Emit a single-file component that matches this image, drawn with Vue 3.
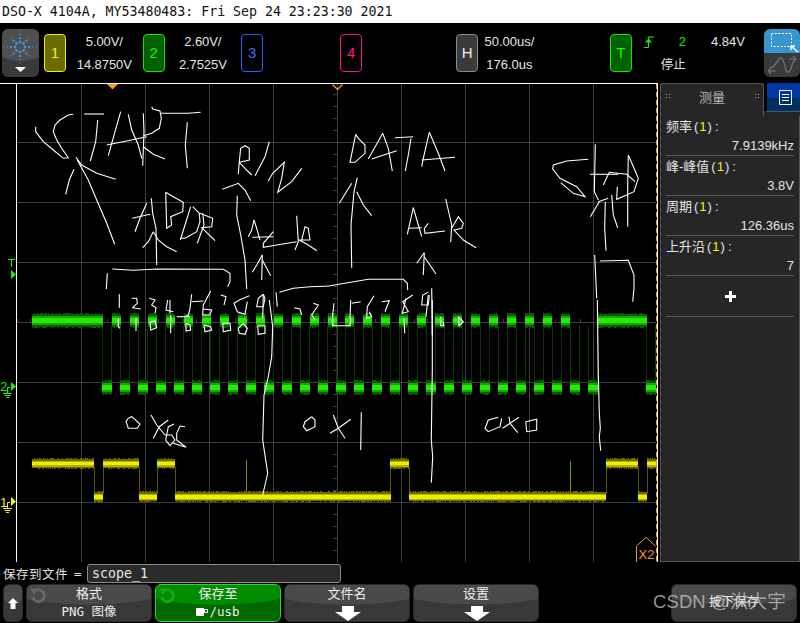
<script setup>
const maps = [
  [0, 85, [
    '220,88 205,90 180,105 165,120 160,140 170,165 185,190 205,218 190,220 160,195 130,170 107,140 107,125',
    '253,87 312,87', '293,105 287,170 271,228', '362,80 345,140 325,212', '320,180 380,168 440,155',
    '385,88 395,135 415,180 425,220', '430,85 432,140 428,242',
    '455,65 458,72 480,78 484,100 478,130 455,145 430,152', '430,185 460,208 495,222',
    '483,85 565,85 602,82', '562,112 556,180 562,250', '222,253 208,285 197,328',
    '228,217 245,240 290,265 347,283', '232,225 265,285 290,345 320,415 344,478',
    '715,268 718,230 722,190 735,182 748,190 748,225 718,232 735,250 755,270', '808,170 795,215 765,272',
    '805,288 818,265 853,232 845,280 833,322 875,290 905,250', '667,313 715,295 735,315 752,347',
    '712,332 710,390 722,450 735,525 740,612', '440,355 420,400 405,440', '397,400 450,388',
    '454,340 458,385 468,430 470,540', '497,322 500,430 515,420 512,395 548,380 550,352 520,335 497,322',
    '572,365 555,420 541,465', '541,460 555,460 590,440 600,410 598,385 578,365', '608,385 612,420 592,475',
    '600,385 638,400 635,425 605,428 645,467', '460,440 445,470 428,488', '460,440 475,465 500,485 530,500',
    '762,405 755,435 745,455', '762,405 770,430 780,465', '757,457 820,455', '820,440 790,475 790,487 830,480 890,470',
    '890,392 895,470 885,495', '905,465 915,425 925,430 930,465 898,465 925,480 950,497',
    '787,510 770,540 757,562', '787,510 785,585', '787,525 812,572', '322,565 319,612',
    '337,552 400,556 470,552 670,553 690,565 690,590 683,605', '358,628 358,668',
    '395,640 410,640 412,655 398,668 422,672', '448,640 465,645 455,660 468,668 465,685',
    '503,645 498,675 520,680', '510,645 510,685', '575,628 570,670 565,690 555,695', '575,650 610,648', '530,695 570,695',
    '632,618 610,660 608,690 630,690 635,675 610,672', '662,630 678,635 672,660',
    '748,632 718,645 702,655 712,680 735,688 742,650', '790,628 775,640 770,665 790,665 795,640 790,628', '790,628 788,700',
    '828,622 832,665', '838,622 880,610 930,605 990,603', '883,668 900,672 905,690', '940,655 955,660 935,690 945,705',
    '355,700 355,725 360,730', '408,700 408,738', '450,712 465,708 470,728 452,735 450,712', '512,690 512,745',
    '558,715 570,720 572,735 558,738 558,715', '612,720 632,725 635,735 615,740 612,720',
    '668,715 690,715 692,735 670,740 668,715', '730,715 742,730 735,748 718,745 715,730 730,715',
    '773,722 795,722 795,745 775,748 773,722'
  ]],
  [330, 85, [
    '77,148 60,232 75,232 105,205 105,180 85,160 77,148', '158,145 115,222', '158,145 175,190 187,258', '125,222 200,197',
    '195,158 250,155', '243,160 235,210 226,258', '298,142 280,220 275,245', '298,142 325,205 345,258', '275,225 375,217',
    '82,278 72,320 63,420 65,548', '65,295 28,355', '80,320 100,360 125,392',
    '250,368 232,448', '250,368 265,420 275,455', '235,430 275,428', '345,438 285,445 283,430 295,415',
    '347,342 365,420 362,472', '365,430 385,395 400,415 395,430 372,435 400,465 438,488',
    '283,503 260,535', '283,503 280,570', '283,515 318,567', '0,602 115,583 220,583 232,595 233,615', '305,610 307,750',
    '775,223 710,228 670,240 668,252 690,280 740,305 765,335 730,325 692,293', '796,178 793,320 805,345', '780,268 865,268',
    '820,300 838,262 890,268 915,290', '895,210 893,300 893,425', '895,210 925,280 912,320 860,343 862,305',
    '808,350 781,395', '835,340 805,350', '826,350 824,430 828,497', '845,330 850,390 863,428',
    '794,510 800,640', '810,528 895,526 912,570 912,610 908,650', '12,655 8,690', '62,645 60,700', '65,655 92,650',
    '132,632 112,665 110,700 125,695 118,680', '155,650 178,647 165,680', '248,630 218,650 235,680 217,685 228,640',
    '295,622 278,630 275,660 295,660 298,630', '295,630 288,695', '8,690 8,722 60,722 62,700', '222,700 224,745',
    '332,695 332,722 342,722 340,710', '385,695 400,710 387,722 385,695'
  ]],
  [0, 300, [
    '808,0 818,80 815,170 805,230 792,285 788,420 803,520 788,585', '385,355 395,350 420,372 412,385 385,385 378,365 385,355',
    '453,345 470,375 495,405', '505,360 478,380 460,415', '522,372 505,380 497,420 510,437 525,420 515,405 495,405',
    '555,380 540,378 530,400 530,420 558,442 520,430', '935,350 945,360 945,380 920,392 910,380 915,365 935,350'
  ]],
  [330, 300, [
    '10,345 25,385 45,415', '62,358 25,385 0,400', '94,337 92,450', '505,352 475,360 465,385 475,395 510,380 515,355',
    '537,350 540,370 563,398', '567,352 540,370 518,385', '587,365 620,358 620,390 590,395 587,365',
    '307,0 307,210 304,420 308,470 304,548', '802,0 805,220 808,340 811,385 808,410 812,452'
  ]]
]
const ink = maps.flatMap(([tx, ty, list]) =>
  list.map((s) =>
    s.split(' ').map((p) => {
      const [x, y] = p.split(',').map(Number)
      return `${(tx + x / 3).toFixed(1)},${(ty + y / 3).toFixed(1)}`
    }).join(' ')
  )
)

const gridX = [81, 145, 209, 273, 337, 401, 465, 529, 593]
const gridY = [142, 202, 262, 322, 382, 442, 502]
const ticksY = Array.from({ length: 39 }, (_, i) => 94 + i * 12)
const ticksX = Array.from({ length: 50 }, (_, i) => 17 + i * 12.8)

let seed = 7
const rnd = () => {
  seed = (seed * 16807) % 2147483647
  return seed / 2147483647
}
const band = (segs, top, bottom, spread) =>
  segs.map(([a, b]) => {
    let d = ''
    for (let x = a; x < b; x++) {
      const t = top - Math.floor(rnd() * spread)
      const h = bottom + Math.floor(rnd() * spread) - t
      d += `M${x + 0.5} ${t}v${h}`
    }
    return d
  }).join('')

const greenHigh = [[32, 103]]
for (let i = 0; i < 13; i++) greenHigh.push([112 + 18 * i, 121 + 18 * i])
for (let i = 0; i < 13; i++) greenHigh.push([345 + 18 * i, 354 + 18 * i])
greenHigh.push([598, 647])
const greenLow = []
for (let i = 0; i < 28; i++) greenLow.push([102 + 18 * i, 112 + 18 * i])
greenLow.push([646, 656])
const greenEdges = [...greenLow.flatMap(([a, b]) => [a, b - 1])]

const yHigh = [[32, 94], [103, 139], [157, 175], [390, 409], [606, 638], [647, 657]]
const yLow = [[94, 103], [139, 157], [175, 391], [409, 606], [638, 647]]
const yEdges = [94, 103, 139, 157, 175, 390, 409, 606, 638, 647]

const fill = (segs, y0, y1) => segs.map(([a, b]) => `M${a} ${y0}H${b}V${y1}H${a}Z`).join('')

const wave = {
  gHighN: band(greenHigh, 314, 327, 2),
  gLowN: band(greenLow, 381, 394, 2),
  gHighM: fill(greenHigh, 316, 325),
  gLowM: fill(greenLow, 383, 392),
  gHighC: fill(greenHigh, 318, 323),
  gLowC: fill(greenLow, 385, 390),
  yHighN: band(yHigh, 459, 468, 2),
  yLowN: band(yLow, 492, 501, 2),
  yHighM: fill(yHigh, 461, 467),
  yLowM: fill(yLow, 494, 500),
  yHighC: fill(yHigh, 462, 465),
  yLowC: fill(yLow, 495, 499)
}

const dots = []
for (let a = 0; a < 8; a++) {
  const ang = (a * Math.PI) / 4
  const straight = a % 2 === 0
  const radii = straight ? [5, 9, 12.5, 16] : [5, 9, 12.5]
  radii.forEach((r, i) => {
    dots.push({ x: 20 + Math.cos(ang) * r, y: 47 + Math.sin(ang) * r, s: [2.4, 1.9, 1.3, 0.9][i] })
  })
}

const readings = [
  { label: '频率', value: '7.9139kHz' },
  { label: '峰-峰值', value: '3.8V' },
  { label: '周期', value: '126.36us' },
  { label: '上升沿', value: '7' }
]
</script>

<template>
  <div class="screen">
    <header class="title">DSO-X 4104A, MY53480483: Fri Sep 24 23:23:30 2021</header>

    <section class="toolbar">
      <div class="logo-btn">
        <svg width="37" height="48" viewBox="2 29 37 48">
          <rect v-for="(d, i) in dots" :key="i" :x="d.x - d.s / 2" :y="d.y - d.s / 2" :width="d.s" :height="d.s" fill="#3b9bdc" />
          <path d="M15 67h11l-5.500 5z" fill="#fff" />
        </svg>
      </div>
      <div class="tab ch1">1</div>
      <div class="vals v1"><span>5.00V/</span><span>14.8750V</span></div>
      <div class="tab ch2">2</div>
      <div class="vals v1"><span>2.60V/</span><span>2.7525V</span></div>
      <div class="tab ch3">3</div>
      <div class="tab ch4">4</div>
      <div class="tab chh">H</div>
      <div class="vals v2"><span>50.00us/</span><span>176.0us</span></div>
      <div class="tab cht">T</div>
      <div class="trig">
        <div class="trig-top">
          <svg width="10" height="12" viewBox="0 0 10 12">
            <path d="M0 11.500H4.500V1H10" fill="none" stroke="#22f000" />
            <path d="M1 6.500L4.500 2.500L8 6.500z" fill="#22f000" />
          </svg>
          <span class="trig-ch">2</span>
          <span class="trig-v">4.84V</span>
        </div>
        <div class="trig-stop">停止</div>
      </div>
      <div class="mode">
        <div class="mode-top">
          <svg width="36" height="24" viewBox="0 0 36 24">
            <rect x="7.500" y="4.500" width="20" height="13" fill="none" stroke="#fff" stroke-dasharray="2 1.500" />
            <path d="M27 17l7 6M27 17h4M27 17v4" stroke="#fff" stroke-width="1.500" fill="none" />
          </svg>
        </div>
        <div class="mode-bottom">
          <svg width="36" height="24" viewBox="0 0 36 24">
            <path d="M6 15C12 15 13 5 17 5S20 19 24 19 27 9 31 8" fill="none" stroke="#6a6a6a" stroke-width="1.500" />
            <path d="M25 6h7l-3-3M32 6l-3 3M4 18h8M4 18l3-3M4 18l3 3" fill="none" stroke="#6a6a6a" stroke-width="1.300" />
          </svg>
        </div>
      </div>
    </section>

    <main class="main">
      <div class="scope">
        <svg class="scope-svg" width="658" height="479" viewBox="0 83 658 479">
          <g shape-rendering="crispEdges">
            <path v-for="x in gridX" :key="'gx' + x" :d="`M${x + 0.5} 84V562`" stroke="#3e3e3e" />
            <path v-for="y in gridY" :key="'gy' + y" :d="`M17 ${y + 0.5}H656`" stroke="#3e3e3e" />
            <path v-for="y in ticksY" :key="'ty' + y" :d="`M333 ${y + 0.5}H338`" stroke="#3e3e3e" />
            <path v-for="x in ticksX" :key="'tx' + x" :d="`M${Math.round(x) + 0.5} 319V323`" stroke="#3e3e3e" />

            <path v-for="x in greenEdges" :key="'ge' + x" :d="`M${x + 0.5} 326V383`" stroke="#0a3206" />
            <path :d="wave.gHighN + wave.gLowN" stroke="#0c5a06" />
            <path :d="wave.gHighM + wave.gLowM" fill="#17a509" />
            <path :d="wave.gHighC + wave.gLowC" fill="#25ea08" />

            <path v-for="x in yEdges" :key="'ye' + x" :d="`M${x + 0.5} 467V494`" stroke="#575700" />
            <path d="M246.500 460V494M570.500 461V495" stroke="#8c8c00" />
            <path :d="wave.yHighN + wave.yLowN" stroke="#6a6a00" />
            <path :d="wave.yHighM + wave.yLowM" fill="#b3b300" />
            <path :d="wave.yHighC + wave.yLowC" fill="#eeee00" />

            <path d="M0 83.500H658M0 562.500H658M16.500 83V562M657.500 83V562" stroke="#fff" />
            <path d="M656.500 84V562" stroke="#f59a1c" stroke-dasharray="5 3" />
          </g>

          <polyline v-for="(p, i) in ink" :key="i" :points="p" fill="none" stroke="#fff" stroke-width="1.100" />

          <path d="M107 84h11l-5.500 5.500z" fill="#f59a1c" />
          <path d="M332.500 84.500l5 5 5-5" fill="none" stroke="#f59a1c" stroke-width="1.300" />

          <path d="M8 259.500h7M11.500 259.500V267" stroke="#22f000" fill="none" />
          <path d="M11 270l5 4.500-5 4.500z" fill="#22f000" />

          <text x="0" y="391" class="mark" fill="#22f000">2</text>
          <path d="M11 382l5 4.500-5 4.500z" fill="#22f000" />
          <path d="M10 387.500H7.500V393M3 393.500h9M4.500 395.500h6M6 397.500h3" stroke="#22f000" fill="none" />

          <text x="0" y="507" class="mark" fill="#f4f400">1</text>
          <path d="M11 497l5 4.500-5 4.500z" fill="#f4f400" />
          <path d="M10 502.500H7.500V508M3 508.500h9M4.500 510.500h6M6 512.500h3" stroke="#f4f400" fill="none" />

          <path d="M636.500 562V546L646 537.500 655.500 546" fill="none" stroke="#f59a1c" />
          <text x="638.500" y="559" class="x2">X2</text>
        </svg>
      </div>

      <aside class="panel">
        <div class="panel-head">
          <div class="panel-tab">
            <span class="grip"></span>
            <span>测量</span>
            <span class="grip"></span>
          </div>
          <div class="panel-icon">
            <svg width="13" height="15" viewBox="0 0 13 15">
              <path d="M.5.5h12v14H.5zM3 4.500h7M3 7.500h7M3 10.500h7" fill="none" stroke="#fff" />
            </svg>
          </div>
        </div>
        <div v-for="r in readings" :key="r.label" class="reading">
          <div class="r-label">{{ r.label }}<span class="paren">(<b>1</b>)</span>:</div>
          <div class="r-value">{{ r.value }}</div>
        </div>
        <div class="plus-row">
          <svg width="11" height="11" viewBox="0 0 11 11"><path d="M4 0h3v4h4v3H7v4H4V7H0V4h4z" fill="#fff" /></svg>
        </div>
      </aside>
    </main>

    <section class="file-row">
      <span class="file-label">保存到文件</span>
      <span class="eq">=</span>
      <div class="file-input">scope_1</div>
    </section>

    <footer class="softkeys">
      <button class="key up">
        <svg width="10" height="11" viewBox="0 0 10 11"><path d="M5 0l5 5H7.500v6h-5V5H0z" fill="#fff" /></svg>
      </button>
      <button class="key wide">
        <svg class="spin" width="18" height="18" viewBox="0 0 18 18"><path d="M5 5.500A6 6 0 1 1 3.500 11" fill="none" stroke="#666" stroke-width="3" /><path d="M1 2l7 1-3 6z" fill="#666" /></svg>
        <span class="k1">格式</span>
        <span class="k2 mono">PNG 图像</span>
      </button>
      <button class="key wide on">
        <svg class="spin" width="18" height="18" viewBox="0 0 18 18"><path d="M5 5.500A6 6 0 1 1 3.500 11" fill="none" stroke="#16a816" stroke-width="3" /><path d="M1 2l7 1-3 6z" fill="#16a816" /></svg>
        <span class="k1">保存至</span>
        <span class="k2 mono usb">
          <svg width="12" height="8" viewBox="0 0 12 8"><path d="M0 0h8v8H0z" fill="#fff" /><path d="M8.500 1.500h3v3h-3z" fill="none" stroke="#fff" /></svg>
          /usb
        </span>
      </button>
      <button class="key wide">
        <span class="k1">文件名</span>
        <svg class="down" width="26" height="15" viewBox="0 0 26 15"><path d="M7 0h12v6h7L13 15 0 6h7z" fill="#fff" /></svg>
      </button>
      <button class="key wide">
        <span class="k1">设置</span>
        <svg class="down" width="26" height="15" viewBox="0 0 26 15"><path d="M7 0h12v6h7L13 15 0 6h7z" fill="#fff" /></svg>
      </button>
      <button class="key wide last">
        <span class="k-center">按下保存</span>
      </button>
      <div class="watermark">CSDN @洪大宇</div>
    </footer>
  </div>
</template>

<style scoped>
.screen {
  position: relative;
  width: 800px;
  height: 623px;
  overflow: hidden;
  background: #000;
  color: #e4e4e4;
  font-family: "Liberation Sans", "Noto Sans CJK SC", sans-serif;
}
.title {
  height: 23px;
  line-height: 24px;
  padding-left: 2px;
  background: #fff;
  color: #111;
  font-family: "DejaVu Sans Mono", monospace;
  font-size: 13.24px;
  white-space: pre;
}
.toolbar {
  display: flex;
  align-items: center;
  height: 60px;
  padding-left: 2px;
}
.logo-btn {
  width: 37px;
  height: 48px;
  margin-right: 5px;
  border-radius: 6px;
  background: radial-gradient(ellipse 90% 45% at 50% 22%, #4f4f4f 97%, #3a3a3a 100%);
}
.logo-btn svg {
  display: block;
}
.tab {
  flex: none;
  box-sizing: border-box;
  width: 22px;
  height: 38px;
  border: 1px solid;
  border-radius: 4px;
  font-size: 15px;
  line-height: 36px;
  text-align: center;
}
.ch1 { border-color: #ecec1a; background: #6b6b00; color: #f4f400; }
.ch2 { border-color: #22e000; background: #006100; color: #22f000; }
.ch3 { border-color: #2a5cff; color: #3a6cff; margin-right: 77px; }
.ch4 { border-color: #ff1493; color: #ff1493; margin-right: 94px; }
.chh { border-color: #8a8a8a; background: #3a3a3a; color: #eee; }
.cht { border-color: #22e000; background: #006100; color: #22f000; }
.vals {
  display: flex;
  flex-direction: column;
  gap: 9px;
  align-items: center;
  font-size: 13px;
  line-height: 14px;
}
.v1 { width: 77px; letter-spacing: -0.1px; }
.v2 { width: 63px; margin-right: 69px; }
.trig {
  width: 104px;
  margin-left: 12px;
  margin-right: 18px;
  padding-top: 1px;
}
.trig-top {
  display: flex;
  align-items: center;
  height: 14px;
  font-size: 13px;
}
.trig-ch {
  margin-left: 25px;
  color: #22f000;
}
.trig-v {
  margin-left: 25px;
}
.trig-stop {
  margin-top: 8px;
  margin-left: 17px;
  font-size: 12.5px;
  line-height: 16px;
}
.mode {
  width: 36px;
  height: 48px;
  margin-left: -1px;
  border-radius: 6px;
  overflow: hidden;
}
.mode svg { display: block; }
.mode-top { height: 24px; background: #3697d0; }
.mode-bottom { height: 24px; background: #3a3a3a; }
.main {
  display: flex;
  height: 479px;
}
.scope {
  flex: none;
  width: 658px;
}
.scope-svg {
  display: block;
}
.mark {
  font-size: 13px;
  font-family: "Liberation Sans", sans-serif;
}
.x2 {
  font-size: 13px;
  fill: #f59a1c;
  font-family: "Liberation Sans", sans-serif;
}
.panel {
  box-sizing: border-box;
  width: 140px;
  margin-left: 2px;
  border: 1px solid #555;
  border-top: 0;
  background: #262626;
}
.panel-head {
  display: flex;
  height: 33px;
  margin: 0 -1px;
  background: #262626;
}
.panel-tab {
  box-sizing: border-box;
  display: flex;
  justify-content: space-between;
  align-items: center;
  width: 104px;
  height: 33px;
  padding: 0 4px 8px;
  border: 1px solid #555;
  border-bottom: 0;
  border-radius: 4px 4px 0 0;
  background: #262626;
  color: #b5b5b5;
  font-size: 13px;
}
.grip {
  width: 5px;
  height: 7px;
  background:
    radial-gradient(circle, #aaa 0.8px, transparent 1px) 0 0 / 3px 3px;
}
.panel-icon {
  display: flex;
  align-items: center;
  justify-content: center;
  box-sizing: border-box;
  width: 36px;
  height: 29px;
  padding: 0 1px 0 4px;
  border-bottom: 1px solid #555;
  border-left: 3px solid #000;
  background: linear-gradient(#0038a8 52%, #00305f 52%);
}
.reading {
  box-sizing: border-box;
  height: 40px;
  margin: 0 5px;
  padding-top: 3px;
  border-bottom: 1px solid #555;
}
.r-label {
  font-size: 13px;
  line-height: 16px;
  white-space: nowrap;
}
.paren {
  margin: 0 2px;
  letter-spacing: 1px;
}
.paren b {
  font-weight: 400;
  color: #f4f400;
}
.r-value {
  margin-top: 3px;
  font-size: 13px;
  line-height: 15px;
  text-align: right;
}
.plus-row {
  display: flex;
  align-items: center;
  justify-content: center;
  height: 40px;
  margin: 0 5px;
  border-bottom: 1px solid #555;
}
.file-row {
  display: flex;
  align-items: center;
  height: 22px;
  padding-left: 3px;
  font-size: 12.5px;
}
.file-label { width: 70px; letter-spacing: 0.5px; }
.eq { width: 13px; margin-left: 1px; font-family: "DejaVu Sans Mono", monospace; }
.file-input {
  box-sizing: border-box;
  width: 254px;
  height: 19px;
  line-height: 17px;
  padding-left: 4px;
  border: 1px solid #8c8c8c;
  border-radius: 3px;
  background: #2a2a2a;
  font-family: "DejaVu Sans Mono", monospace;
  font-size: 13.3px;
}
.softkeys {
  position: relative;
  display: flex;
  gap: 3px;
  height: 39px;
  padding-left: 3px;
}
.key {
  position: relative;
  box-sizing: border-box;
  flex: none;
  height: 38px;
  padding: 0;
  border: 1px solid #2a2a2a;
  border-radius: 6px;
  background: radial-gradient(ellipse 72% 55% at 50% 0, #4a4a4a 97%, #383838 100%);
  color: #eee;
  font-family: inherit;
}
.up {
  width: 20px;
  display: flex;
  align-items: center;
  justify-content: center;
}
.wide { width: 126px; }
.on {
  border-color: #22dd22;
  background: radial-gradient(ellipse 72% 55% at 50% 0, #008c00 97%, #006800 100%);
}
.last {
  margin-left: 129px;
}
.spin {
  position: absolute;
  left: 2px;
  top: 1px;
}
.k1 {
  position: absolute;
  left: 0;
  right: 0;
  top: 1px;
  font-size: 13px;
  line-height: 16px;
  text-align: center;
}
.k2 {
  position: absolute;
  left: 0;
  right: 0;
  top: 19px;
  font-size: 12.5px;
  line-height: 16px;
  text-align: center;
}
.mono {
  font-family: "DejaVu Sans Mono", "Noto Sans CJK SC", monospace;
}
.usb {
  display: flex;
  justify-content: center;
  align-items: center;
  gap: 1px;
}
.down {
  position: absolute;
  left: 50px;
  top: 21px;
}
.k-center {
  position: absolute;
  left: 0;
  right: 0;
  top: 6px;
  font-size: 12.5px;
  text-align: center;
}
.watermark {
  position: absolute;
  left: 653px;
  top: 6px;
  font-size: 18.5px;
  letter-spacing: 0.1px;
  line-height: 24px;
  color: rgba(205, 205, 205, 0.72);
  white-space: nowrap;
}
</style>
